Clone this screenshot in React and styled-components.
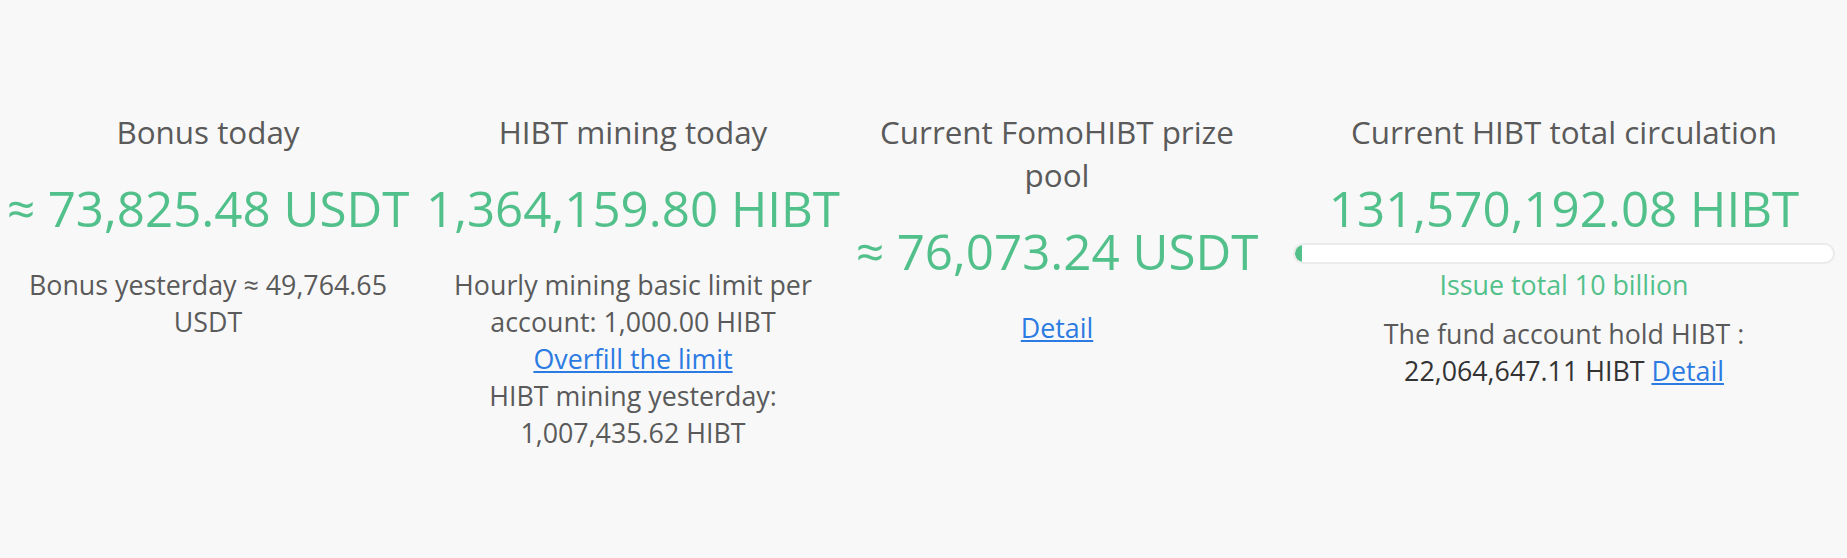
import React from "react";
import styled, { createGlobalStyle } from "styled-components";

const GlobalStyle = createGlobalStyle`
  html, body {
    margin: 0;
    padding: 0;
    background: #f8f8f8;
  }
  body {
    font-family: "Open Sans", "Noto Sans", sans-serif;
    color: #5a5a5a;
  }
`;

const Page = styled.div`
  min-height: 558px;
  box-sizing: border-box;
  padding-top: 110px;
  background: #f8f8f8;
`;

const Stats = styled.div`
  display: grid;
  grid-template-columns: 416fr 434fr 414fr 583fr;
  align-items: start;
`;

const Column = styled.div`
  padding: ${(p) => (p.$wide ? "0 12px 0 29px" : "0 4px")};
  text-align: center;
  min-width: 0;
`;

const Title = styled.h3`
  margin: 0;
  font-size: 31.4px;
  line-height: 43px;
  font-weight: 400;
  color: #5a5a5a;
`;

const Amount = styled.div`
  margin-top: 25px;
  font-size: 49.3px;
  line-height: 60px;
  color: #52c08a;
  white-space: nowrap;
`;

const Note = styled.p`
  margin: ${(p) => p.$top ?? 28}px 0 0;
  font-size: 26.8px;
  line-height: 37px;
  color: ${(p) => (p.$green ? "#52c08a" : "#5a5a5a")};
`;

const Strong = styled.span`
  color: #333;
  white-space: nowrap;
`;

const Link = styled.a`
  color: #2c7be2;
  text-decoration: underline;
  cursor: pointer;
`;

const Progress = styled.div`
  width: 100%;
  margin-top: 5px;
  height: 21px;
  box-sizing: border-box;
  border: 2px solid #ebebeb;
  border-radius: 11px;
  background: #fff;
  overflow: hidden;
`;

const Fill = styled.div`
  height: 100%;
  background: #52c08a;
  border-radius: 9px 0 0 9px;
`;

export default function App() {
  const circulation = 131570192.08;
  const total = 10000000000;
  const pct = (circulation / total) * 100;
  return (
    <>
      <GlobalStyle />
      <Page>
        <Stats>
          <Column>
            <Title>Bonus today</Title>
            <Amount>≈ 73,825.48 USDT</Amount>
            <Note>Bonus yesterday ≈ 49,764.65 USDT</Note>
          </Column>
          <Column>
            <Title>HIBT mining today</Title>
            <Amount>1,364,159.80 HIBT</Amount>
            <Note>
              Hourly mining basic limit per account: 1,000.00 HIBT
              <br />
              <Link>Overfill the limit</Link>
              <br />
              HIBT mining yesterday: 1,007,435.62 HIBT
            </Note>
          </Column>
          <Column>
            <Title>Current FomoHIBT prize pool</Title>
            <Amount>≈ 76,073.24 USDT</Amount>
            <Note $top={28}>
              <Link>Detail</Link>
            </Note>
          </Column>
          <Column $wide>
            <Title>Current HIBT total circulation</Title>
            <Amount>131,570,192.08 HIBT</Amount>
            <Progress>
              <Fill style={{ width: `${pct}%` }} />
            </Progress>
            <Note $top={2} $green>
              Issue total 10 billion
            </Note>
            <Note $top={12}>
              The fund account hold HIBT :{" "}
              <Strong>22,064,647.11 HIBT</Strong> <Link>Detail</Link>
            </Note>
          </Column>
        </Stats>
      </Page>
    </>
  );
}
